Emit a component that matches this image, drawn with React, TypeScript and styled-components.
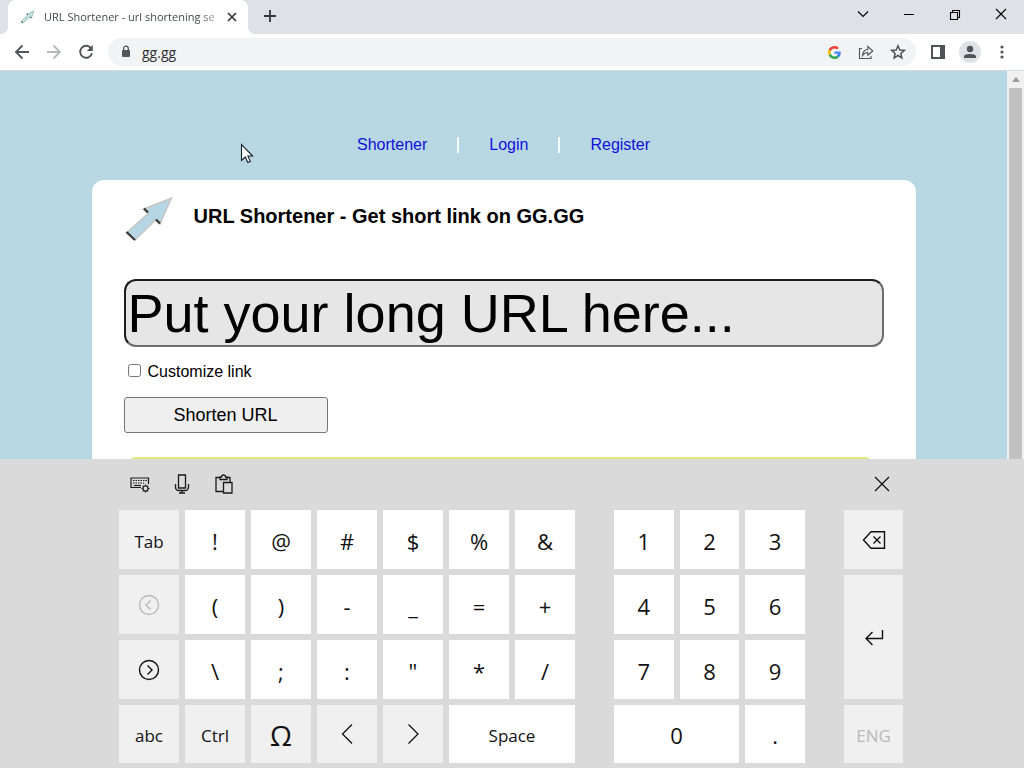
import React from "react";
import styled, { createGlobalStyle, css } from "styled-components";

const UI = `"Open Sans", "Noto Sans", sans-serif`;
const ARIAL = `"Liberation Sans", Arial, sans-serif`;

const GlobalStyle = createGlobalStyle`
  * { box-sizing: border-box; }
  html, body { margin: 0; padding: 0; }
  body { background: #dadada; }
  button { border: 0; padding: 0; margin: 0; background: none; color: inherit; font: inherit; }
`;

const Screen = styled.div`
  display: flex;
  flex-direction: column;
  height: 100vh;
  overflow: hidden;
`;

/* Browser window */

const TabStrip = styled.header`
  display: flex;
  align-items: stretch;
  height: 34px;
  flex: none;
  padding-left: 8px;
  background: #dee1e6;
  font-family: ${UI};
`;

const Tab = styled.div`
  position: relative;
  display: flex;
  align-items: center;
  width: 240px;
  padding: 0 8px 0 12px;
  background: #fff;
  border-radius: 8px 8px 0 0;

  &::before,
  &::after {
    content: "";
    position: absolute;
    bottom: 0;
    width: 8px;
    height: 8px;
  }
  &::before {
    left: -8px;
    background: radial-gradient(circle at 0 0, transparent 8px, #fff 8px);
  }
  &::after {
    right: -8px;
    background: radial-gradient(circle at 100% 0, transparent 8px, #fff 8px);
  }
`;

const TabTitle = styled.span`
  flex: 1;
  min-width: 0;
  margin-left: 8px;
  white-space: nowrap;
  font-size: 11px;
  line-height: 16px;
  color: #45494d;
  mask-image: linear-gradient(to right, #000 156px, transparent 182px);
`;

const IconButton = styled.button<{ $w?: number; $color?: string }>`
  display: flex;
  align-items: center;
  justify-content: center;
  flex: none;
  width: ${(p) => p.$w ?? 32}px;
  height: 32px;
  color: ${(p) => p.$color ?? "#505357"};
`;

const WindowControls = styled.div`
  display: flex;
  align-items: flex-start;
  margin-left: auto;
`;

const WindowButton = styled(IconButton)`
  width: 46px;
  height: 30px;
  color: #000;
`;

const Toolbar = styled.div`
  display: flex;
  align-items: center;
  flex: none;
  height: 37px;
  padding: 0 6px;
  background: #fff;
  border-bottom: 1px solid #d5dade;
  font-family: ${UI};
`;

const AddressBar = styled.div`
  display: flex;
  align-items: center;
  flex: 1;
  min-width: 0;
  height: 28px;
  margin: 0 6px;
  padding: 0 2px 0 10px;
  background: #f1f3f4;
  border-radius: 14px;
`;

const AddressInput = styled.input`
  flex: 1;
  min-width: 0;
  height: 24px;
  margin-left: 8px;
  padding: 0;
  border: 0;
  outline: 0;
  background: transparent;
  font-family: ${UI};
  font-size: 14px;
  color: #303235;
`;

const Avatar = styled.span`
  display: flex;
  width: 22px;
  height: 22px;
  border-radius: 50%;
  background: #dee1e6;
`;

/* Web page */

const Viewport = styled.div`
  position: relative;
  display: flex;
  flex: 1;
  min-height: 0;
  background: #b7d7e3;
`;

const Page = styled.main`
  flex: 1;
  min-width: 0;
  overflow: hidden;
  padding-top: 65px;
  font-family: ${ARIAL};
  font-size: 16px;
  color: #000;
`;

const Nav = styled.nav`
  display: flex;
  justify-content: center;
  align-items: center;
  gap: 30px;
  line-height: 18px;
`;

const NavLink = styled.a`
  color: #1010d8;
  text-decoration: none;
`;

const Divider = styled.span`
  width: 2px;
  height: 16px;
  background: #f4fcff;
`;

const Card = styled.section`
  max-width: 824px;
  margin: 26px auto 0;
  padding: 14px 32px 0;
  background: #fff;
  border-radius: 12px;
`;

const Heading = styled.div`
  display: flex;
  align-items: flex-start;
  gap: 20px;
`;

const Title = styled.h1`
  margin: 0;
  padding-top: 10px;
  font-size: 20px;
  line-height: 24px;
  font-weight: 700;
`;

const UrlInput = styled.input`
  display: block;
  width: 100%;
  height: 68px;
  margin-top: 35px;
  padding: 0 2px;
  border: 2px solid;
  border-color: #1c1c1e #6e6e70 #6e6e70 #1c1c1e;
  border-radius: 12px;
  background: #e6e6e6;
  font-family: ${ARIAL};
  font-size: 54px;
  color: #000;

  &::placeholder {
    color: #000;
    opacity: 1;
  }
`;

const CheckLabel = styled.label`
  display: flex;
  align-items: flex-start;
  gap: 7px;
  margin: 16px 0 0 4px;
  line-height: 18px;
`;

const Check = styled.input`
  width: 13px;
  height: 13px;
  margin: 1px 0 0;
`;

const Submit = styled.button`
  display: block;
  width: 204px;
  height: 36px;
  margin-top: 16px;
  border: 1px solid #767676;
  border-radius: 3px;
  background: #efefef;
  font-size: 18px;
`;

const Notice = styled.div`
  height: 80px;
  margin: 24px 14px 0 7px;
  border-radius: 4px;
  background: #e0e77a;
`;

const Scrollbar = styled.div`
  display: flex;
  flex-direction: column;
  align-items: center;
  width: 17px;
  background: #f1f1f1;
`;

const ScrollUp = styled.div`
  display: flex;
  align-items: center;
  justify-content: center;
  height: 17px;
`;

const Thumb = styled.div`
  flex: 1;
  width: 13px;
  background: #c1c1c1;
`;

const Pointer = styled.svg`
  position: absolute;
  left: 240px;
  top: 72px;
`;

/* Touch keyboard */

const Keyboard = styled.section`
  flex: none;
  padding: 0 2px 5px 0;
  background: #dadada;
  font-family: ${UI};
  color: #111;
`;

const KeyboardInner = styled.div`
  max-width: 784px;
  margin: 0 auto;
`;

const KeyboardBar = styled.div`
  display: flex;
  align-items: center;
  height: 51px;
  padding: 0 5px 2px 5px;
`;

const Spacer = styled.span`
  flex: 1;
`;

const ToolButton = styled(IconButton)`
  margin-right: 10px;
  color: #1a1a1a;
`;

const KeyGroups = styled.div`
  display: grid;
  grid-template-columns: 456fr 191fr 59fr;
  gap: 39px;
`;

const KeyGrid = styled.div<{ $cols: number }>`
  display: grid;
  grid-template-columns: repeat(${(p) => p.$cols}, 1fr);
  grid-template-rows: repeat(3, 59px) 58px;
  gap: 6px;
`;

type KeyProps = { $kind?: "dark"; $wide?: boolean; $tall?: boolean; $size?: "label" | "symbol" | "omega" };

const sizes = { label: 17, symbol: 22, omega: 28 };

const Key = styled.button<KeyProps>`
  display: flex;
  align-items: center;
  justify-content: center;
  min-width: 0;
  padding-top: ${(p) => (p.$size === "label" ? 4 : p.$size ? 2 : 0)}px;
  background: ${(p) => (p.$kind === "dark" ? "#f0f0f0" : "#fff")};
  font-size: ${(p) => sizes[p.$size ?? "symbol"]}px;
  line-height: 30px;
  ${(p) => p.$wide && css`grid-column: span 2;`}
  ${(p) => p.$tall && css`grid-row: span 2;`}
  &:disabled { color: #b9b9b9; }
`;

const Line = ({ d, size = 16, w = 1 }: { d: string; size?: number; w?: number }) => (
  <svg width={size} height={size} viewBox={`0 0 ${size} ${size}`} fill="none" stroke="currentColor" strokeWidth={w} aria-hidden="true">
    <path d={d} />
  </svg>
);

const ArrowLogo = () => (
  <svg width="50" height="50" viewBox="0 0 50 50" aria-hidden="true">
    <path d="M47.500 4 L36 30 L31.500 26 L11 46 L2.500 39 L24 19.500 L19.500 15 Z" fill="#b5d6e4" stroke="#c9c5c2" strokeWidth="1.500" />
    <path d="M2.500 38 L11 46 M20 14.500 L24 18.500 M32 25.500 L36 29.500" stroke="#3a3631" strokeWidth="2.200" fill="none" />
  </svg>
);

const Favicon = () => (
  <svg width="16" height="16" viewBox="0 0 16 16" aria-hidden="true">
    <path d="M14 2 L11.500 9 L10 8 L3 14 L1 12.500 L7.500 6 L6.500 5 Z" fill="#bfe0df" stroke="#8fb5b5" strokeWidth="0.700" />
    <path d="M1 12.500 L3 14 M6.700 4.800 L8 6 M10 8 L11.400 9" stroke="#385552" strokeWidth="1" />
  </svg>
);

const GoogleG = () => (
  <svg width="13" height="13" viewBox="0 0 48 48" aria-hidden="true">
    <path fill="#EA4335" d="M24 9.500c3.500 0 6.700 1.200 9.200 3.600l6.900-6.900C35.900 2.400 30.500 0 24 0 14.600 0 6.500 5.400 2.600 13.200l8 6.200C12.400 13.700 17.700 9.500 24 9.500z" />
    <path fill="#4285F4" d="M47 24.600c0-1.600-.2-3.100-.4-4.600H24v9h12.900c-.6 3-2.300 5.500-4.800 7.200l7.700 6C44.400 38 47 32 47 24.600z" />
    <path fill="#FBBC05" d="M10.500 28.600A14.500 14.500 0 0 1 10.500 19.400l-8-6.200a24 24 0 0 0 0 21.600z" />
    <path fill="#34A853" d="M24 48c6.500 0 11.900-2.100 15.900-5.800l-7.700-6c-2.200 1.500-4.900 2.300-8.200 2.300-6.300 0-11.600-4.200-13.500-9.900l-8 6.200C6.500 42.600 14.600 48 24 48z" />
  </svg>
);

const SYMBOLS = ["!", "@", "#", "$", "%", "&"];
const ROW_TWO = ["(", ")", "-", "_", "=", "+"];
const ROW_THREE = ["\\", ";", ":", "\"", "*", "/"];
const DIGITS = ["1", "2", "3", "4", "5", "6", "7", "8", "9"];

const SymbolKeys = ({ keys }: { keys: string[] }) => (
  <>
    {keys.map((k) => (
      <Key key={k} $size="symbol">{k}</Key>
    ))}
  </>
);

export default function App() {
  return (
    <Screen>
      <GlobalStyle />
      <TabStrip>
        <Tab>
          <Favicon />
          <TabTitle>URL Shortener - url shortening se</TabTitle>
          <IconButton $w={16} aria-label="Close tab" $color="#33363a">
            <Line d="M4 4 L12 12 M12 4 L4 12" w={1.7} />
          </IconButton>
        </Tab>
        <IconButton $w={44} aria-label="New tab" $color="#33363a">
          <Line d="M8 2 V14 M2 8 H14" w={1.8} />
        </IconButton>
        <WindowControls>
          <WindowButton aria-label="Search tabs"><Line d="M3 4.500 L8 9.500 L13 4.500" w={1.1} /></WindowButton>
          <WindowButton aria-label="Minimize"><Line d="M3 7.500 H13" /></WindowButton>
          <WindowButton aria-label="Restore"><Line d="M3.500 5.500 H10.500 V12.500 H3.500 Z M5.500 5.500 V3.500 H12.500 V10.500 H10.500" w={1.1} /></WindowButton>
          <WindowButton aria-label="Close window"><Line d="M3 2 L13 12 M13 2 L3 12" w={1.1} /></WindowButton>
        </WindowControls>
      </TabStrip>

      <Toolbar>
        <IconButton aria-label="Back"><Line d="M15 8 H2 M8.500 1.500 L2 8 L8.500 14.500" w={1.8} /></IconButton>
        <IconButton aria-label="Forward" $color="#b6b8ba"><Line d="M1 8 H14 M7.500 1.500 L14 8 L7.500 14.500" w={1.8} /></IconButton>
        <IconButton aria-label="Reload">
          <svg width="16" height="16" viewBox="0 0 16 16" fill="none" stroke="currentColor" strokeWidth="1.900">
            <path d="M13.300 4.600 A6 6 0 1 0 14 9.300" />
            <path d="M14.800 1 V7 H8.800 Z" fill="currentColor" stroke="none" />
          </svg>
        </IconButton>
        <AddressBar>
          <svg width="16" height="16" viewBox="0 0 16 16" aria-hidden="true">
            <rect x="4" y="6" width="8" height="7" rx="1" fill="#505357" />
            <path d="M5.700 6.500 V4.500 A2.300 2.300 0 0 1 10.300 4.500 V6.500" fill="none" stroke="#505357" strokeWidth="1.300" />
          </svg>
          <AddressInput aria-label="Address" defaultValue="gg.gg" />
          <IconButton aria-label="Google"><GoogleG /></IconButton>
          <IconButton aria-label="Share">
            <Line d="M4 4.500 H1.500 V14.500 H13 V12 M4.500 11.500 C4.800 7.800 6.500 5.800 9.800 5.500 V2.500 L14.800 7 L9.800 11.200 V8.500 C7.500 8.500 6 9.300 4.500 11.500 Z" w={1.1} />
          </IconButton>
          <IconButton aria-label="Bookmark">
            <Line d="M8 1.800 L9.800 6 L14.300 6.400 L10.900 9.400 L11.900 13.900 L8 11.500 L4.100 13.900 L5.100 9.400 L1.700 6.400 L6.200 6 Z" w={1.5} />
          </IconButton>
        </AddressBar>
        <IconButton aria-label="Side panel">
          <svg width="16" height="16" viewBox="0 0 16 16"><path d="M1 1 H15 V15 H1 Z M3 3 V13 H10 V3 Z" fill="currentColor" fillRule="evenodd" /></svg>
        </IconButton>
        <IconButton aria-label="Profile">
          <Avatar>
            <svg width="22" height="22" viewBox="0 0 22 22"><circle cx="11" cy="8" r="3.200" fill="#505357" /><path d="M5 17 V15.500 C5 12.300 17 12.300 17 15.500 V17 Z" fill="#505357" /></svg>
          </Avatar>
        </IconButton>
        <IconButton aria-label="Menu">
          <svg width="16" height="16" viewBox="0 0 16 16" fill="currentColor"><circle cx="8" cy="3" r="1.600" /><circle cx="8" cy="8" r="1.600" /><circle cx="8" cy="13" r="1.600" /></svg>
        </IconButton>
      </Toolbar>

      <Viewport>
        <Page>
          <Nav>
            <NavLink href="#shortener">Shortener</NavLink>
            <Divider />
            <NavLink href="#login">Login</NavLink>
            <Divider />
            <NavLink href="#register">Register</NavLink>
          </Nav>
          <Card>
            <Heading>
              <ArrowLogo />
              <Title>URL Shortener - Get short link on GG.GG</Title>
            </Heading>
            <UrlInput type="text" aria-label="Long URL" placeholder="Put your long URL here..." />
            <CheckLabel>
              <Check type="checkbox" />
              Customize link
            </CheckLabel>
            <Submit>Shorten URL</Submit>
            <Notice />
          </Card>
        </Page>
        <Scrollbar>
          <ScrollUp>
            <svg width="8" height="5" viewBox="0 0 8 5"><path d="M0 5 L4 0 L8 5 Z" fill="#9b9b9b" /></svg>
          </ScrollUp>
          <Thumb />
        </Scrollbar>
        <Pointer width="14" height="22" viewBox="0 0 14 22">
          <path d="M1.500 1.500 V17.500 L5.300 14 L7.800 19.500 L10.300 18.400 L7.900 13 H12.700 Z" fill="#fff" stroke="#14202c" strokeWidth="1.100" />
        </Pointer>
      </Viewport>

      <Keyboard>
        <KeyboardInner>
          <KeyboardBar>
            <ToolButton aria-label="Keyboard settings">
              <svg width="20" height="20" viewBox="0 0 20 20" fill="none" stroke="currentColor" strokeWidth="1.200">
                <path d="M11 13.500 H1 V4 H18.500 V10" />
                <path d="M3 6.500 H17 M3 9 H14" strokeDasharray="1.500 1" />
                <path d="M4 11.500 H11" />
                <circle cx="15.500" cy="14.500" r="2.500" />
                <path d="M15.500 10.500 V12 M15.500 17 V18.500 M11.500 14.500 H13 M18 14.500 H19.500 M12.700 11.700 L13.700 12.700 M17.300 16.300 L18.300 17.300 M18.300 11.700 L17.300 12.700 M13.700 16.300 L12.700 17.300" />
              </svg>
            </ToolButton>
            <ToolButton aria-label="Dictate">
              <Line size={20} w={1.3} d="M6.500 1 H13.500 V14 H6.500 Z M3.500 10 V13 Q3.500 16.500 7 16.500 H13 Q16.500 16.500 16.500 13 V10 M10 16.500 V19 M7 19 H13" />
            </ToolButton>
            <ToolButton aria-label="Clipboard">
              <Line size={20} w={1.3} d="M9 17.500 H2 V3.500 H6 M13 3.500 H16 V8 M6 3 V5.500 H13 V3 H11.500 Q11.500 1 9.500 1 Q7.500 1 7.500 3 Z M9.500 8.500 H18 V19 H9.500 Z" />
            </ToolButton>
            <Spacer />
            <IconButton aria-label="Close keyboard" $color="#111">
              <Line d="M1 1 L15 15 M15 1 L1 15" w={1.3} />
            </IconButton>
          </KeyboardBar>
          <KeyGroups>
            <KeyGrid $cols={7}>
              <Key $kind="dark" $size="label">Tab</Key>
              <SymbolKeys keys={SYMBOLS} />
              <Key $kind="dark" disabled aria-label="Previous symbols">
                <Line size={22} w={1.4} d="M1.500 11 A9.500 9.500 0 1 1 20.500 11 A9.500 9.500 0 1 1 1.500 11 Z M12.500 6.500 L8 11 L12.500 15.500" />
              </Key>
              <SymbolKeys keys={ROW_TWO} />
              <Key $kind="dark" aria-label="Next symbols">
                <Line size={22} w={1.4} d="M1.500 11 A9.500 9.500 0 1 1 20.500 11 A9.500 9.500 0 1 1 1.500 11 Z M9.500 6.500 L14 11 L9.500 15.500" />
              </Key>
              <SymbolKeys keys={ROW_THREE} />
              <Key $kind="dark" $size="label">abc</Key>
              <Key $kind="dark" $size="label">Ctrl</Key>
              <Key $kind="dark" $size="omega">Ω</Key>
              <Key $kind="dark" aria-label="Left"><Line size={22} w={1.3} d="M16 1.500 L6.500 11 L16 20.500" /></Key>
              <Key $kind="dark" aria-label="Right"><Line size={22} w={1.3} d="M6.500 1.500 L16 11 L6.500 20.500" /></Key>
              <Key $wide $size="label">Space</Key>
            </KeyGrid>
            <KeyGrid $cols={3}>
              <SymbolKeys keys={DIGITS} />
              <Key $wide $size="symbol">0</Key>
              <Key $size="symbol">.</Key>
            </KeyGrid>
            <KeyGrid $cols={1}>
              <Key $kind="dark" aria-label="Backspace">
                <Line size={24} w={1.4} d="M9 3.700 H22.500 V20.300 H9 L1.500 12 Z M11.500 8.500 L18.500 15.500 M18.500 8.500 L11.500 15.500" />
              </Key>
              <Key $kind="dark" $tall aria-label="Enter">
                <Line size={20} w={1.4} d="M18.500 3 V11.500 H2 M8.500 5 L2 11.500 L8.500 18" />
              </Key>
              <Key $kind="dark" $size="label" disabled>ENG</Key>
            </KeyGrid>
          </KeyGroups>
        </KeyboardInner>
      </Keyboard>
    </Screen>
  );
}
